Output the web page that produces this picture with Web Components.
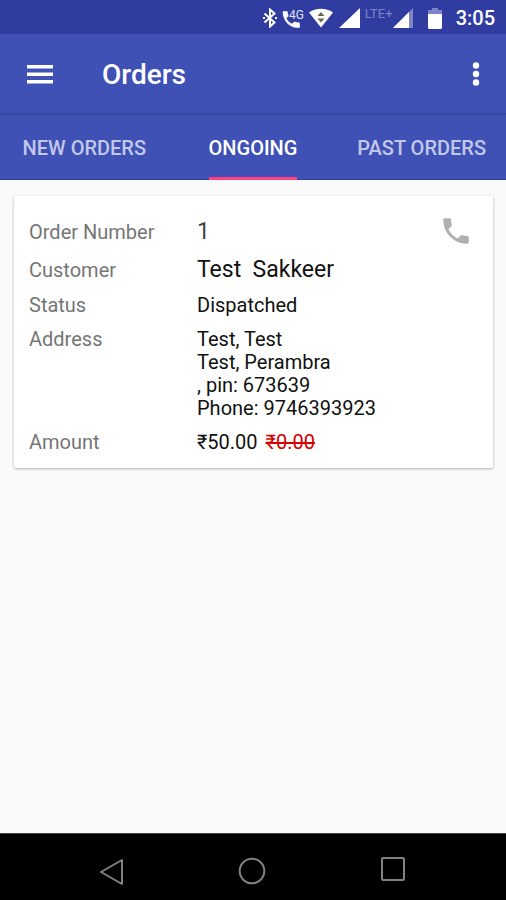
<!DOCTYPE html>
<html lang="en">
<head>
<meta charset="utf-8">
<meta name="viewport" content="width=device-width, initial-scale=1">
<title>Orders</title>
<style>
html, body { margin: 0; }
body { font-family: Roboto, "Noto Sans", sans-serif; background: #fafafa; color: #111; }
</style>
</head>
<body>
<orders-screen></orders-screen>
<script>
const define = (name, html, setup) => {
  const template = document.createElement('template');
  template.innerHTML = html;
  customElements.define(name, class extends HTMLElement {
    constructor() {
      super();
      this.attachShadow({ mode: 'open' }).append(template.content.cloneNode(true));
    }
    connectedCallback() { if (setup) setup(this, this.shadowRoot); }
  });
};

define('status-bar', `
<style>
:host { display: flex; align-items: center; justify-content: flex-end; height: 34px; padding: 2px 11px 0 0; box-sizing: border-box; background: #303c9f; color: #fff; }
svg { display: block; flex: none; }
.bt { margin-right: 5px; }
.call { margin-right: 4px; }
.wifi { margin-right: 6px; }
.sig { margin-right: 5px; }
.lte { font-size: 13px; line-height: 14px; color: #7c85ca; padding-bottom: 8px; }
.sig2 { margin-right: 15px; }
.bat { margin-right: 14px; }
time { font-size: 20px; line-height: 24px; font-weight: 500; }
</style>
<svg class="bt" width="14" height="20" viewBox="0 0 14 20" fill="none" stroke="#fff" stroke-width="2"><path d="M1.500 5.500 11.500 14.500 7 18.500V1.500L11.500 5.500 1.500 14.500"/><path d="M0 9h2v2H0zM12 9h2v2h-2z" fill="#fff" stroke="none"/></svg>
<svg class="call" width="23" height="22" viewBox="0 0 23 22"><path d="M1 4.500H5.200L6.200 9 4.200 11.200C5.500 14 7.300 15.700 10 17L12.200 15 17.500 16V20.500C8 21.500 1 14 1 4.500Z" fill="#fff" stroke="#fff" stroke-width=".6"/><text x="7" y="12" font-size="12" fill="#dfe2f5">4G</text></svg>
<svg class="wifi" width="24" height="20" viewBox="0 0 24 20"><path d="M0 4.500C7-.5 17-.5 24 4.500L12 19.500Z" fill="#fff"/><path d="M8.500 8 12 4l3.500 4zM8.500 10.500h7L12 14.500z" fill="#66684f"/></svg>
<svg class="sig" width="21" height="20" viewBox="0 0 21 20"><path d="M21 0V20H0Z" fill="#fff"/></svg>
<span class="lte">LTE+</span>
<svg class="sig2" width="20" height="20" viewBox="0 0 20 20"><path d="M20 0V20H0Z" fill="#7d85c8"/><path d="M16 4V20H0Z" fill="#fff"/></svg>
<svg class="bat" width="14" height="21" viewBox="0 0 14 21"><path d="M0 2h4V0h6v2h4v5H0z" fill="#7d85c8"/><path d="M0 6h14v13.500q0 1.500-1.500 1.500h-11Q0 21 0 19.500z" fill="#fff"/></svg>
<time>3:05</time>`);

define('app-bar', `
<style>
:host { display: flex; align-items: center; height: 79px; padding: 0 16px 0 18px; box-sizing: border-box; background: #3f51b5; color: #fff; }
button { display: grid; place-items: center; padding: 0; border: 0; background: none; color: inherit; width: 44px; height: 48px; cursor: pointer; }
.more { width: 28px; }
h1 { flex: 1; margin: 2px 0 0 40px; font-size: 28px; line-height: 32px; font-weight: 500; }
svg { display: block; }
</style>
<button aria-label="Open menu"><svg width="26" height="20" viewBox="0 0 26 20" fill="#fff"><path d="M0 1h26v3.500H0zM0 8.500h26V12H0zM0 16h26v3.500H0z"/></svg></button>
<h1><slot></slot></h1>
<button class="more" aria-label="More options"><svg width="8" height="24" viewBox="0 0 8 24" fill="#fff"><circle cx="4" cy="3.500" r="3.200"/><circle cx="4" cy="12" r="3.200"/><circle cx="4" cy="20.500" r="3.200"/></svg></button>`);

define('tab-bar', `
<style>
:host { display: grid; grid-template-columns: repeat(3, 1fr); height: 67px; box-sizing: border-box; background: linear-gradient(#3443a2, #3f51b5 4px); border-bottom: 1px solid #3040a0; }
</style><slot></slot>`, host => host.setAttribute('role', 'tablist'));

define('tab-item', `
<style>
:host { display: flex; justify-content: center; }
button { padding: 5px 0 0; border: 0; border-bottom: 3px solid transparent; margin-bottom: -1px; background: none; font: 500 20px/24px Roboto, sans-serif; color: #c2c8e8; white-space: nowrap; cursor: pointer; }
:host([selected]) button { color: #fff; border-color: #ff4081; }
</style><button role="tab" aria-selected="false"><slot></slot></button>`,
(host, root) => root.querySelector('button').setAttribute('aria-selected', host.hasAttribute('selected')));

define('order-card', `
<style>
:host { display: grid; gap: 11px; position: relative; margin: 16px 13px 0 14px; padding: 22px 15px 14px; background: #fff; border-radius: 2px; box-shadow: 0 1px 3px rgba(0,0,0,.3); }
.action { position: absolute; top: 14px; right: 16px; }
</style><slot></slot><div class="action"><slot name="action"></slot></div>`);

define('order-field', `
<style>
:host { display: grid; grid-template-columns: 168px 1fr; align-items: baseline; font-size: 20px; line-height: 23px; }
.label { color: #757575; }
.value { white-space: pre-line; }
:host([large]) .value { font-size: 23px; line-height: 27px; white-space: pre-wrap; }
:host([muted]) .value { color: #424242; }
::slotted(del) { color: #d50000; margin-left: 3px; }
</style><span class="label"></span><span class="value"><slot></slot></span>`,
(host, root) => { root.querySelector('.label').textContent = host.getAttribute('label'); });

define('call-button', `
<style>
button { display: grid; place-items: center; width: 42px; height: 42px; padding: 0; border: 0; background: none; cursor: pointer; }
</style><button aria-label="Call customer"><svg width="34" height="34" viewBox="0 0 24 24" fill="#b0b0b0"><path d="M6.620 10.790c1.440 2.830 3.760 5.140 6.590 6.590l2.200-2.200c.27-.27.67-.36 1.020-.24 1.120.37 2.330.57 3.570.57.55 0 1 .45 1 1V20c0 .55-.45 1-1 1-9.390 0-17-7.610-17-17 0-.55.45-1 1-1h3.500c.55 0 1 .45 1 1 0 1.250.2 2.450.57 3.570.11.35.03.74-.25 1.020z"/></svg></button>`);

define('nav-bar', `
<style>
:host { display: grid; grid-template-columns: repeat(3, 1fr); height: 67px; padding: 8px 43px 0 40px; box-sizing: border-box; background: #000; border-top: 1px solid #444; }
button { display: grid; place-items: center; padding: 0; border: 0; background: none; cursor: pointer; }
svg { display: block; fill: none; stroke: #828282; stroke-width: 2; }
</style>
<button aria-label="Back"><svg width="28" height="28" viewBox="0 0 28 28"><path d="M25 3V27L4 15Z" stroke-linejoin="round"/></svg></button>
<button aria-label="Home"><svg width="28" height="28" viewBox="0 0 28 28"><circle cx="14" cy="14" r="12.300"/></svg></button>
<button aria-label="Recent apps"><svg width="28" height="28" viewBox="0 0 28 28"><rect x="3" y="1" width="22" height="22" rx="1"/></svg></button>`);

define('orders-screen', `
<style>
:host { display: flex; flex-direction: column; min-height: 100vh; }
main { flex: 1; }
</style>
<status-bar></status-bar>
<app-bar>Orders</app-bar>
<tab-bar><tab-item>NEW ORDERS</tab-item><tab-item selected>ONGOING</tab-item><tab-item>PAST ORDERS</tab-item></tab-bar>
<main><order-card>
<order-field label="Order Number" large muted>1</order-field>
<order-field label="Customer" large>Test  Sakkeer</order-field>
<order-field label="Status">Dispatched</order-field>
<order-field label="Address">Test, Test
Test, Perambra
, pin: 673639
Phone: 9746393923</order-field>
<order-field label="Amount">₹50.00 <del>₹0.00</del></order-field>
<call-button slot="action"></call-button>
</order-card></main>
<nav-bar></nav-bar>`);
</script>
</body>
</html>
